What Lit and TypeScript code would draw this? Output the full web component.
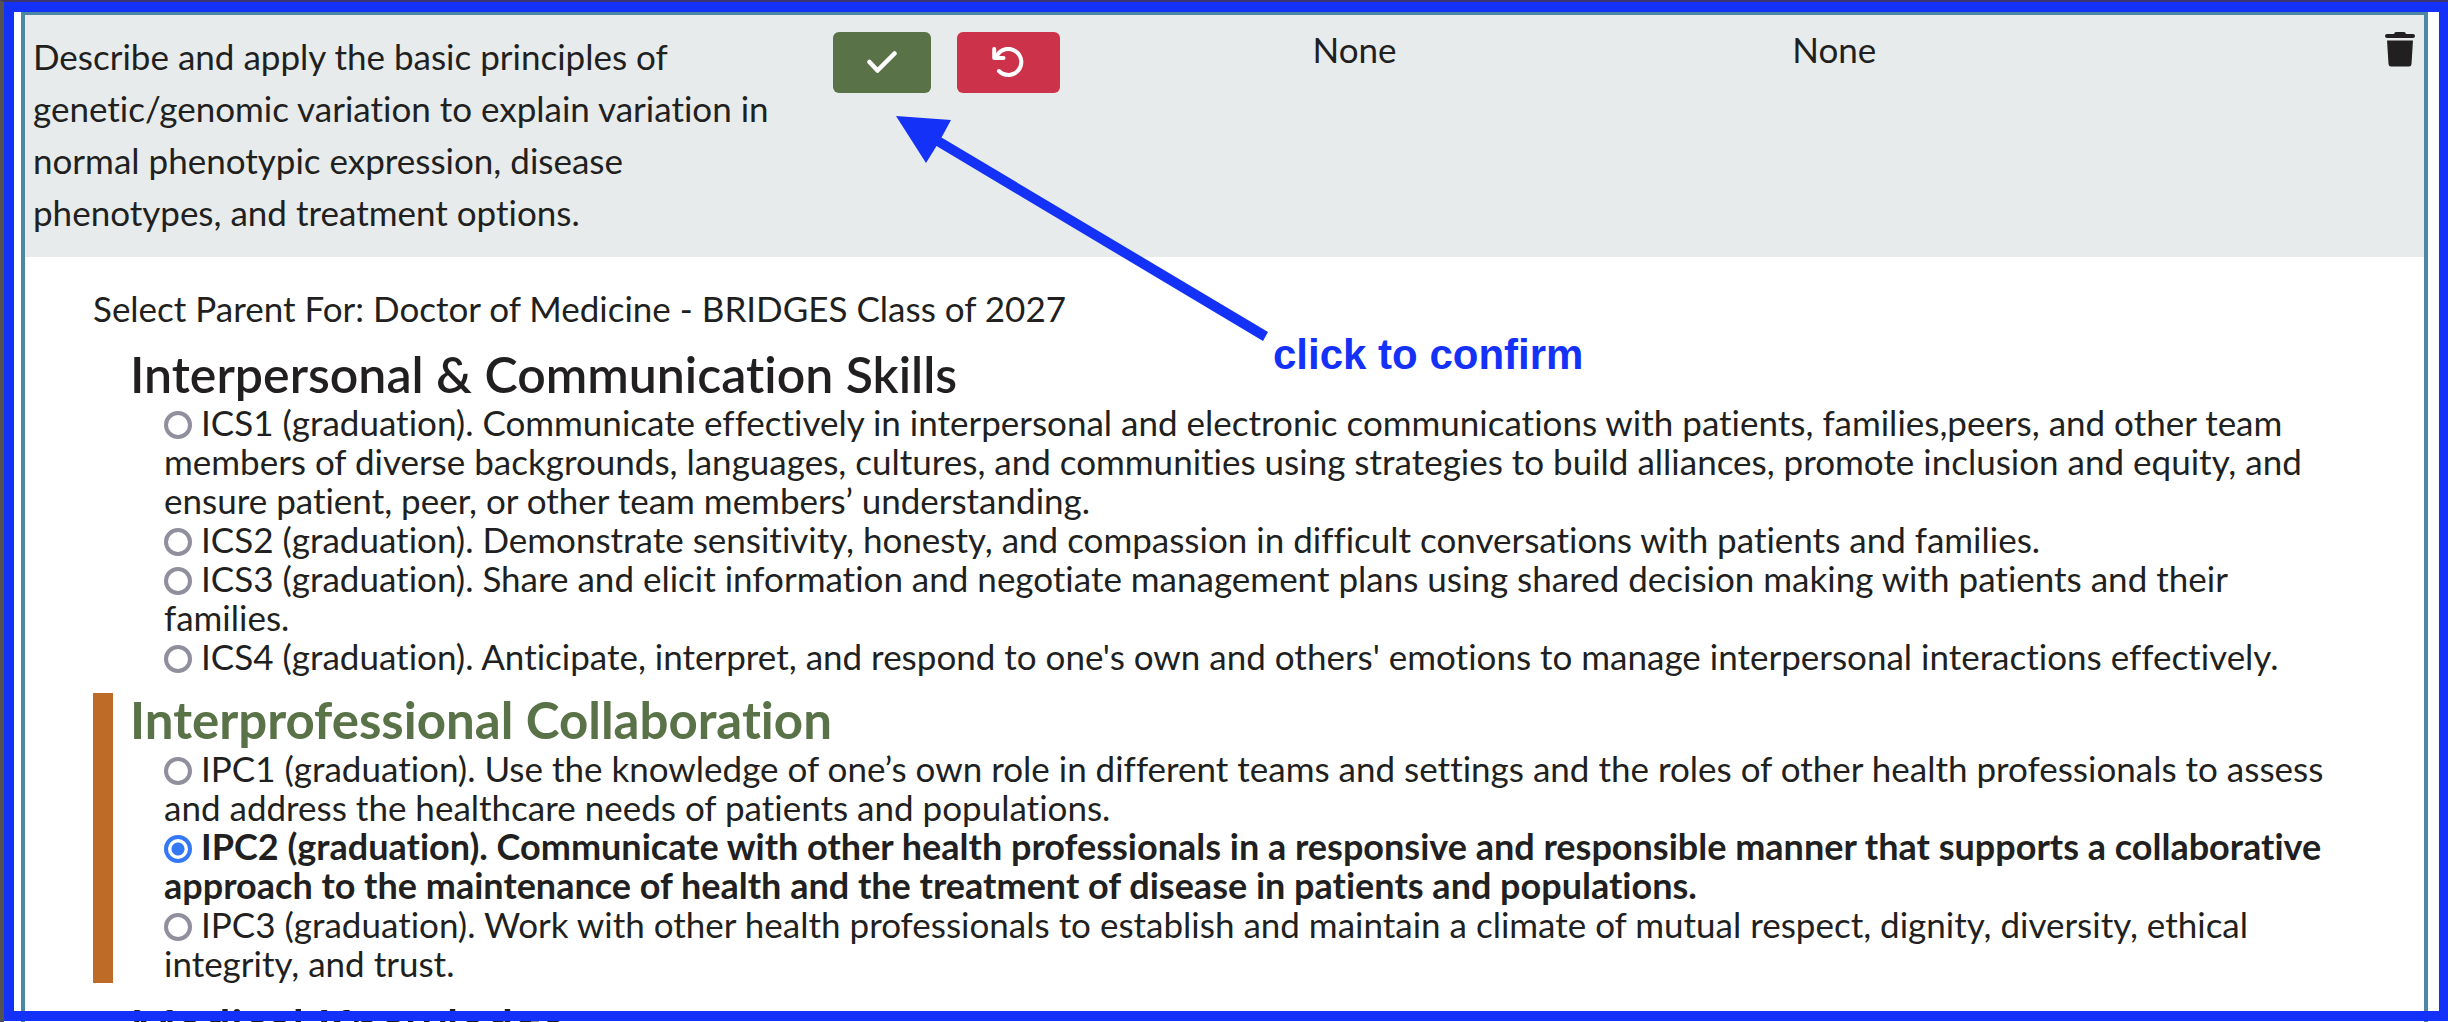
import { LitElement, html, css, svg } from "lit";
import { customElement, property, state } from "lit/decorators.js";
import { classMap } from "lit/directives/class-map.js";

interface Competency {
  id: string;
  text: string;
}

interface Domain {
  title: string;
  competencies: Competency[];
}

const DOMAINS: Domain[] = [
  {
    title: "Interpersonal & Communication Skills",
    competencies: [
      {
        id: "ICS1",
        text: "Communicate effectively in interpersonal and electronic communications with patients, families,peers, and other team members of diverse backgrounds, languages, cultures, and communities using strategies to build alliances, promote inclusion and equity, and ensure patient, peer, or other team members’ understanding.",
      },
      {
        id: "ICS2",
        text: "Demonstrate sensitivity, honesty, and compassion in difficult conversations with patients and families.",
      },
      {
        id: "ICS3",
        text: "Share and elicit information and negotiate management plans using shared decision making with patients and their families.",
      },
      {
        id: "ICS4",
        text: "Anticipate, interpret, and respond to one's own and others' emotions to manage interpersonal interactions effectively.",
      },
    ],
  },
  {
    title: "Interprofessional Collaboration",
    competencies: [
      {
        id: "IPC1",
        text: "Use the knowledge of one’s own role in different teams and settings and the roles of other health professionals to assess and address the healthcare needs of patients and populations.",
      },
      {
        id: "IPC2",
        text: "Communicate with other health professionals in a responsive and responsible manner that supports a collaborative approach to the maintenance of health and the treatment of disease in patients and populations.",
      },
      {
        id: "IPC3",
        text: "Work with other health professionals to establish and maintain a climate of mutual respect, dignity, diversity, ethical integrity, and trust.",
      },
    ],
  },
  { title: "Medical Knowledge", competencies: [] },
];

const checkIcon = svg`<path d="M2.500 11 L10.500 19.500 L27.500 2.500" fill="none" stroke="currentColor" stroke-width="4.500" stroke-linecap="round" stroke-linejoin="round"/>`;

const undoIcon = svg`
  <path d="M5 8.500 A13 13 0 1 1 7 24" fill="none" stroke="currentColor" stroke-width="4" stroke-linecap="round"/>
  <path d="M2.200 2 V11 H11.500" fill="none" stroke="currentColor" stroke-width="4" stroke-linecap="round" stroke-linejoin="round"/>
  <path d="M2.200 5 V11 H8.500 Z" fill="currentColor"/>`;

const trashIcon = svg`
  <path d="M9 2 Q9.500 0 11 0 H19 Q20.500 0 21 2 H28 Q30 2 30 4 Q30 6 28 6 H2 Q0 6 0 4 Q0 2 2 2 Z" fill="currentColor"/>
  <path d="M2 8.500 H28 L26.500 32 Q26.300 34.500 24 34.500 H6 Q3.700 34.500 3.500 32 Z" fill="currentColor"/>`;

@customElement("objective-row")
export class ObjectiveRow extends LitElement {
  static styles = css`
    :host {
      display: grid;
      grid-template-columns: 5fr 3fr 3fr 4fr;
      background: #e7ebec;
      padding: 15px 0 19px;
    }
    .title {
      margin: 0;
      padding: 0 8px;
      line-height: 52px;
    }
    .actions {
      display: flex;
      align-items: flex-start;
      gap: 26px;
      padding: 2px 8px 0;
    }
    .btn {
      display: flex;
      align-items: center;
      justify-content: center;
      height: 61px;
      border: 0;
      border-radius: 6px;
      color: #fff;
      cursor: pointer;
    }
    .confirm {
      background: #5a7248;
      padding: 0 34px;
    }
    .cancel {
      background: #cc334b;
      padding: 0 35px;
    }
    .value {
      padding: 0 8px;
      line-height: 38px;
    }
    .last {
      display: flex;
      justify-content: space-between;
      align-items: flex-start;
      padding: 0 9px 0 8px;
    }
    .last .value {
      padding: 0;
    }
    .trash {
      border: 0;
      padding: 2px 0 0;
      background: none;
      color: #211f20;
      line-height: 0;
      cursor: pointer;
    }
  `;

  render() {
    return html`
      <p class="title">
        Describe and apply the basic principles of genetic/genomic variation to
        explain variation in normal phenotypic expression, disease phenotypes,
        and treatment options.
      </p>
      <div class="actions">
        <button class="btn confirm" type="button" aria-label="Confirm">
          <svg width="30" height="24" viewBox="0 0 30 24">${checkIcon}</svg>
        </button>
        <button class="btn cancel" type="button" aria-label="Cancel">
          <svg width="33" height="32" viewBox="0 0 33 32">${undoIcon}</svg>
        </button>
      </div>
      <div class="value">None</div>
      <div class="last">
        <span class="value">None</span>
        <button class="trash" type="button" aria-label="Remove">
          <svg width="30" height="35" viewBox="0 0 30 35">${trashIcon}</svg>
        </button>
      </div>
    `;
  }
}

@customElement("domain-group")
export class DomainGroup extends LitElement {
  @property({ attribute: false }) domain!: Domain;
  @property() selected = "";

  static styles = css`
    :host {
      display: block;
    }
    .group {
      border-left: 20px solid transparent;
      padding-left: 17px;
    }
    .group.active {
      border-left-color: #bd6b27;
    }
    .heading {
      margin: 0;
      font-size: 50px;
      font-weight: 600;
      line-height: 54px;
    }
    .active .heading {
      color: #5a7248;
      font-size: 51px;
      font-weight: 700;
    }
    .list {
      list-style: none;
      margin: 0;
      padding: 2px 0 0 34px;
      line-height: 39px;
    }
    .chosen {
      font-size: 36px;
      font-weight: 700;
    }
    .radio {
      appearance: none;
      box-sizing: border-box;
      width: 28px;
      height: 28px;
      margin: 0 9px 0 0;
      border: 4px solid #8f8f9d;
      border-radius: 50%;
      background: #fff;
      vertical-align: -3px;
    }
    .radio:checked {
      border-color: #3478f6;
      background: radial-gradient(circle, #3478f6 0 6px, #fff 7px);
    }
  `;

  private pick(id: string) {
    this.dispatchEvent(new CustomEvent("pick", { detail: id }));
  }

  render() {
    const { title, competencies } = this.domain;
    const active = competencies.some((c) => c.id === this.selected);
    return html`
      <section class=${classMap({ group: true, active })}>
        <h3 class="heading">${title}</h3>
        <ul class="list">
          ${competencies.map(
            (c) => html`<li class=${classMap({ chosen: c.id === this.selected })}>
              <input
                class="radio"
                type="radio"
                name="parent"
                id=${c.id}
                .checked=${c.id === this.selected}
                @change=${() => this.pick(c.id)}
              /><label for=${c.id}>${c.id} (graduation). ${c.text}</label>
            </li>`
          )}
        </ul>
      </section>
    `;
  }
}

@customElement("app-root")
export class AppRoot extends LitElement {
  @state() private selected = "IPC2";

  static styles = css`
    :host {
      display: block;
      position: relative;
      box-sizing: border-box;
      height: 100vh;
      overflow: hidden;
      border-left: 4px solid #525252;
      border-top: 2px solid #3a3570;
      background: #fff;
      color: #211f20;
      font-family: Lato, "Open Sans", sans-serif;
      font-size: 35px;
      font-variant-ligatures: none;
    }
    .panel {
      margin: 10px 20px 0 17px;
      border: solid #4d87a5;
      border-width: 3px 4px 0;
    }
    .picker {
      display: flex;
      flex-direction: column;
      gap: 17px;
      padding: 25px 68px 0;
    }
    .lead {
      margin: 0 0 -4px;
      line-height: 52px;
    }
    .frame {
      position: absolute;
      inset: 0 0 1px 0;
      border: 10px solid #1431f7;
      border-right-width: 9px;
      pointer-events: none;
    }
    .arrow {
      position: absolute;
      left: 892px;
      top: 114px;
      pointer-events: none;
    }
    .note {
      position: absolute;
      left: 1269px;
      top: 329px;
      color: #1431f7;
      font: 700 42px/48px "Liberation Sans", Arial, sans-serif;
      white-space: nowrap;
    }
  `;

  render() {
    return html`
      <main class="panel">
        <objective-row></objective-row>
        <div class="picker">
          <p class="lead">
            Select Parent For: Doctor of Medicine - BRIDGES Class of 2027
          </p>
          ${DOMAINS.map(
            (domain) => html`<domain-group
              .domain=${domain}
              .selected=${this.selected}
              @pick=${(e: CustomEvent<string>) => (this.selected = e.detail)}
            ></domain-group>`
          )}
        </div>
      </main>
      <div class="frame"></div>
      <svg class="arrow" width="376" height="228" viewBox="0 0 376 228">
        <path
          d="M0 0 L55 4 L45.500 21.500 L372 216 L367 225 L40.500 30 L30 47 Z"
          fill="#1431f7"
        />
      </svg>
      <div class="note">click to confirm</div>
    `;
  }
}
